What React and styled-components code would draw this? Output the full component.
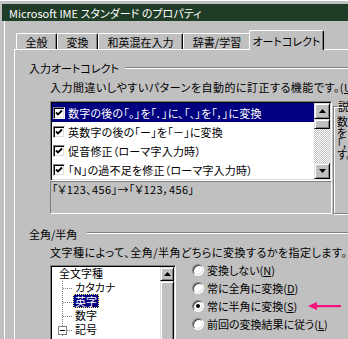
import React from 'react';
import styled, { createGlobalStyle } from 'styled-components';

const Global = createGlobalStyle`
  html, body { margin: 0; padding: 0; background: #c0c0c0; }
  body { width: 348px; height: 339px; overflow: hidden; }
`;

const Window = styled.div`
  width: 348px;
  height: 339px;
  box-sizing: border-box;
  overflow: hidden;
  background: #c0c0c0;
  padding: 4px 0 0 2px;
  display: flex;
  flex-direction: column;
  font-family: "Noto Sans CJK JP", "Noto Sans", sans-serif;
  font-size: 11px;
  font-feature-settings: "palt";
  color: #000;
  box-shadow: inset 1px 3px 0 -2px #fff;
`;

const TitleBar = styled.div`
  flex-shrink: 0;
  height: 17px;
  line-height: 18px;
  background: #1f3c26;
  color: #fff;
  padding-left: 7px;
  white-space: nowrap;
  font-size: 11px;
`;

const Client = styled.div`
  flex: 1;
  min-height: 0;
  margin-left: 2px;
  border-left: 1px solid #fff;
  padding: 9px 0 0 9px;
  display: flex;
  flex-direction: column;
`;

const TabStrip = styled.div`
  display: flex;
  align-items: flex-end;
  height: 19px;
  padding-left: 2px;
  flex-shrink: 0;
`;

const Tab = styled.div`
  width: ${p => p.$w}px;
  height: ${p => (p.$active ? 20 : 16)}px;
  box-sizing: border-box;
  flex-shrink: 0;
  background: #c0c0c0;
  border-top: 1px solid #fff;
  border-left: 1px solid #fff;
  border-right: 1px solid #000;
  border-top-left-radius: 2px;
  border-top-right-radius: 2px;
  box-shadow: inset -1px 0 #808080;
  display: flex;
  align-items: center;
  justify-content: center;
  white-space: nowrap;
  line-height: 14px;
  padding-top: ${p => (p.$active ? 0 : 1)}px;
  ${p => p.$active && `
    position: relative;
    z-index: 1;
    margin-left: -2px;
    margin-bottom: -1px;
  `}
`;

const Panel = styled.div`
  flex: 1;
  min-height: 0;
  border-top: 1px solid #fff;
  border-left: 1px solid #fff;
  display: flex;
  flex-direction: column;
  white-space: nowrap;
`;

const Heading = styled.div`
  display: flex;
  align-items: center;
  height: 12px;
  line-height: 12px;
  margin-top: ${p => p.$mt}px;
  padding-left: 14px;
  flex-shrink: 0;
`;

const HeadLine = styled.div`
  flex: 1;
  margin-left: ${p => p.$gap}px;
  margin-top: ${p => p.$dy || 0}px;
  border-top: 1px solid #808080;
  border-bottom: 1px solid #fff;
  height: 0;
`;

const Desc = styled.div`
  height: 14px;
  line-height: 14px;
  margin-top: ${p => p.$mt}px;
  padding-left: 35px;
  letter-spacing: 0.5px;
  flex-shrink: 0;
`;

const BodyRow = styled.div`
  display: flex;
  align-items: flex-start;
  padding-left: 35px;
  margin-top: ${p => p.$mt}px;
  flex-shrink: 0;
`;

const LeftCol = styled.div`
  width: 282px;
  flex-shrink: 0;
  display: flex;
  flex-direction: column;
  margin-top: 2px;
`;

const sunken = `
  box-sizing: border-box;
  border: 1px solid;
  border-color: #808080 #fff #fff #808080;
  box-shadow: inset 1px 1px #000, inset -1px -1px #dfdfdf;
  padding: 1px;
`;

const ListBox = styled.div`
  ${sunken}
  height: 80px;
  background: #fff;
  display: flex;
`;

const ListRows = styled.div`
  flex: 1;
  display: flex;
  flex-direction: column;
`;

const ListRow = styled.div`
  display: flex;
  align-items: center;
  gap: 3px;
  height: 19px;
  padding-left: 1px;
  letter-spacing: 0.2px;
  background: ${p => (p.$sel ? '#000080' : 'transparent')};
  color: ${p => (p.$sel ? '#fff' : '#000')};
`;

const CheckBox = styled.span`
  width: 12px;
  height: 12px;
  box-sizing: border-box;
  flex-shrink: 0;
  border: 1px solid;
  border-color: #808080 #fff #fff #808080;
  box-shadow: inset 1px 1px #000, inset -1px -1px #dfdfdf;
  background: #fff;
  display: flex;
  align-items: center;
  justify-content: center;
`;

const ScrollBar = styled.div`
  width: ${p => p.$w}px;
  flex-shrink: 0;
  display: flex;
  flex-direction: column;
`;

const SBtn = styled.div`
  height: ${p => p.$h}px;
  flex-shrink: 0;
  box-sizing: border-box;
  background: #c0c0c0;
  border: 1px solid;
  border-color: #dfdfdf #000 #000 #dfdfdf;
  box-shadow: inset 1px 1px #fff, inset -1px -1px #808080;
  display: flex;
  align-items: center;
  justify-content: center;
`;

const Track = styled.div`
  flex: 1;
  background: repeating-conic-gradient(#fff 0 25%, #c0c0c0 0 50%) 0 0 / 2px 2px;
`;

const SampleBox = styled.div`
  height: 33px;
  box-sizing: border-box;
  border: 1px solid;
  border-color: #808080 #fff #fff #808080;
  background: #c0c0c0;
  line-height: 14px;
  letter-spacing: 0.4px;
  padding: 0 1px;
`;

const SideBox = styled.fieldset`
  margin: 0 0 0 1px;
  padding: 3px 3px 0 3px;
  width: 70px;
  height: 115px;
  box-sizing: border-box;
  border: 1px solid #808080;
  box-shadow: inset 1px 1px #fff, 1px 1px #fff;
  flex-shrink: 0;
  min-width: 0;
`;

const SideLegend = styled.legend`
  padding: 0 1px;
  line-height: 14px;
`;

const SideLine = styled.div`
  line-height: 11px;
  height: 11px;
`;

const Tree = styled.div`
  ${sunken}
  width: 126px;
  height: 90px;
  margin-top: 4px;
  background: #fff;
  display: flex;
  flex-shrink: 0;
`;

const TreeItems = styled.div`
  flex: 1;
  display: flex;
  flex-direction: column;
`;

const TreeRow = styled.div`
  display: flex;
  align-items: center;
  height: 14px;
  padding-left: 5px;
`;

const TreeLabel = styled.span`
  line-height: 12px;
  padding: 0 ${p => (p.$sel ? 1 : 2)}px;
  margin-top: -2px;
  background: ${p => (p.$sel ? '#000080' : 'transparent')};
  color: ${p => (p.$sel ? '#fff' : '#000')};
  border: ${p => (p.$sel ? '1px dotted #ffff80' : '0')};
`;

const Radios = styled.div`
  display: flex;
  flex-direction: column;
  margin-left: 16px;
`;

const RadioRow = styled.div`
  display: flex;
  align-items: center;
  height: 18px;
  gap: 3px;
`;

const RadioCircle = styled.span`
  width: 12px;
  height: 12px;
  flex-shrink: 0;
  box-sizing: border-box;
  border-radius: 50%;
  border: 1px solid;
  border-color: #808080 #fff #fff #808080;
  box-shadow: inset 1px 1px #404040, inset -1px -1px #dfdfdf;
  background: #fff;
  display: flex;
  align-items: center;
  justify-content: center;
  &::after {
    content: '';
    width: 4px;
    height: 4px;
    border-radius: 50%;
    background: ${p => (p.$on ? '#000' : 'transparent')};
  }
`;

const Arrow = styled.svg`
  margin-left: 8px;
  flex-shrink: 0;
`;

const Up = () => (
  <svg width="7" height="4" viewBox="0 0 7 4"><polygon points="3.5,0 7,4 0,4" fill="#000" /></svg>
);
const Down = () => (
  <svg width="7" height="4" viewBox="0 0 7 4"><polygon points="0,0 7,0 3.5,4" fill="#000" /></svg>
);

const Check = () => (
  <svg width="8" height="8" viewBox="0 0 8 8">
    <path d="M1 3.5 L3 5.5 L7 1.5" stroke="#000" strokeWidth="1.8" fill="none" />
  </svg>
);

const Gutter = ({ last, box }) => (
  <svg width="16" height="14" viewBox="0 0 16 14" style={{ flexShrink: 0 }}>
    <line x1="5.5" y1="0" x2="5.5" y2={last ? 7 : 14} stroke="#808080" strokeDasharray="1 1" />
    <line x1="6" y1="7.5" x2="16" y2="7.5" stroke="#808080" strokeDasharray="1 1" />
    {box && (
      <g>
        <rect x="1.5" y="3.5" width="8" height="8" fill="#fff" stroke="#808080" />
        <line x1="3" y1="7.5" x2="8" y2="7.5" stroke="#000" />
      </g>
    )}
  </svg>
);

const listItems = [
  '数字の後の「。」を「．」に、「、」を「，」に変換',
  '英数字の後の「ー」を「－」に変換',
  '促音修正（ローマ字入力時）',
  '「N」の過不足を修正（ローマ字入力時）',
];

const radios = [
  ['変換しない', 'N'],
  ['常に全角に変換', 'D'],
  ['常に半角に変換', 'S'],
  ['前回の変換結果に従う', 'L'],
];

export default function App() {
  return (
    <>
      <Global />
      <Window>
        <TitleBar>Microsoft IME スタンダード のプロパティ</TitleBar>
        <Client>
          <TabStrip>
            <Tab $w={41}>全般</Tab>
            <Tab $w={41}>変換</Tab>
            <Tab $w={85}>和英混在入力</Tab>
            <Tab $w={68}>辞書/学習</Tab>
            <Tab $w={75} $active>オートコレクト</Tab>
          </TabStrip>
          <Panel>
            <Heading $mt={12}>
              入力オートコレクト
              <HeadLine $gap={6} />
            </Heading>
            <Desc $mt={6}>
              入力間違いしやすいパターンを自動的に訂正する機能です。(<u>U</u>)
            </Desc>
            <BodyRow $mt={5}>
              <LeftCol>
                <ListBox>
                  <ListRows>
                    {listItems.map((t, i) => (
                      <ListRow key={i} $sel={i === 0}>
                        <CheckBox><Check /></CheckBox>
                        {t}
                      </ListRow>
                    ))}
                  </ListRows>
                  <ScrollBar $w={16}>
                    <SBtn $h={16}><Up /></SBtn>
                    <SBtn $h={10} />
                    <Track />
                    <SBtn $h={16}><Down /></SBtn>
                  </ScrollBar>
                </ListBox>
                <SampleBox>「￥123、456」→「￥123，456」</SampleBox>
              </LeftCol>
              <SideBox>
                <SideLegend>説明</SideLegend>
                <SideLine>数字の後の「。」</SideLine>
                <SideLine>を「．」に、「、」</SideLine>
                <SideLine>「，」に変換しま</SideLine>
                <SideLine>す。</SideLine>
              </SideBox>
            </BodyRow>
            <Heading $mt={14}>
              全角/半角
              <HeadLine $gap={10} $dy={-3} />
            </Heading>
            <Desc $mt={5}>
              文字種によって、全角/半角どちらに変換するかを指定します。(<u>W</u>)
            </Desc>
            <BodyRow $mt={2}>
              <Tree>
                <TreeItems>
                  <TreeRow><TreeLabel>全文字種</TreeLabel></TreeRow>
                  <TreeRow><Gutter /><TreeLabel>カタカナ</TreeLabel></TreeRow>
                  <TreeRow><Gutter /><TreeLabel $sel>英字</TreeLabel></TreeRow>
                  <TreeRow><Gutter /><TreeLabel>数字</TreeLabel></TreeRow>
                  <TreeRow><Gutter box /><TreeLabel>記号</TreeLabel></TreeRow>
                </TreeItems>
                <ScrollBar $w={14}>
                  <SBtn $h={14}><Up /></SBtn>
                  <SBtn $h={60} />
                </ScrollBar>
              </Tree>
              <Radios>
                {radios.map(([t, k], i) => (
                  <RadioRow key={k}>
                    <RadioCircle $on={i === 2} />
                    <span>{t}(<u>{k}</u>)</span>
                    {i === 2 && (
                      <Arrow width="33" height="10" viewBox="0 0 33 10">
                        <polygon points="0,5 9,1 9,9" fill="#f5127f" />
                        <rect x="8" y="4" width="25" height="2.2" fill="#f5127f" />
                      </Arrow>
                    )}
                  </RadioRow>
                ))}
              </Radios>
            </BodyRow>
          </Panel>
        </Client>
      </Window>
    </>
  );
}
